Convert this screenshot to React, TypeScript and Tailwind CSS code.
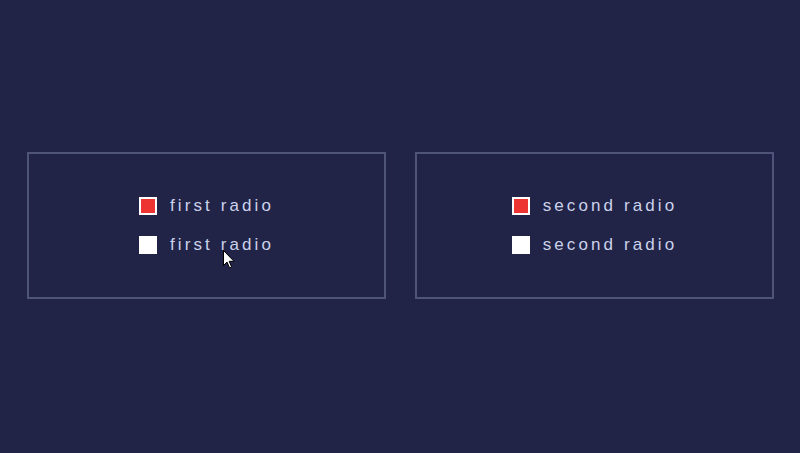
import React from "react";

function Row({ label, checked }: { label: string; checked: boolean }) {
  return (
    <div className="flex items-center gap-[13px] h-[18px]">
      <span
        className={
          "block w-[18px] h-[18px] border-2 border-white " +
          (checked ? "bg-[#ee3333]" : "bg-white")
        }
      />
      <span className="text-[17px] leading-[18px] tracking-[3.1px] text-[#cbd2ec] font-['Liberation_Sans',Arial,sans-serif]">
        {label}
      </span>
    </div>
  );
}

function Box({ label }: { label: string }) {
  return (
    <div className="w-[359px] h-[147px] border-2 border-[#4f5579] flex items-center justify-center">
      <div className="flex flex-col gap-[21px]">
        <Row label={label} checked />
        <Row label={label} checked={false} />
      </div>
    </div>
  );
}

export default function App() {
  return (
    <div className="relative w-[800px] h-[453px] bg-[#212446] flex items-center justify-center pl-[1px]">
      <div className="flex items-center gap-[29px] mb-[2px]">
        <Box label="first radio" />
        <Box label="second radio" />
      </div>
      <svg
        className="absolute left-[223px] top-[250px]"
        width="12"
        height="19"
        viewBox="0 0 12 19"
      >
        <path
          d="M0.5 0.5 L0.5 15.5 L4 12 L6.5 17.8 L8.6 16.9 L6.2 11.3 L11 11.3 Z"
          fill="#ffffff"
          stroke="#000000"
          strokeWidth="1"
          strokeLinejoin="round"
        />
      </svg>
    </div>
  );
}
